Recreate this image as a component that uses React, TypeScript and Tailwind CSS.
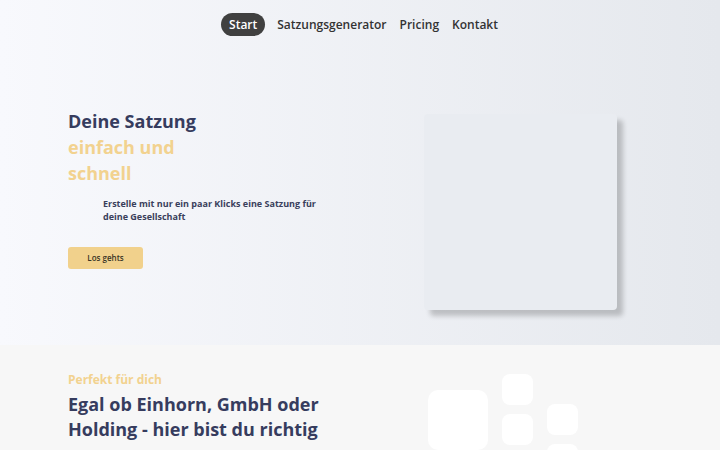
const navItems = ['Start', 'Satzungsgenerator', 'Pricing', 'Kontakt'];

export default function App() {
  return (
    <div className="min-h-screen bg-[#f7f7f7] font-['Open_Sans',sans-serif]">
      {/* Hero */}
      <section className="h-[345px] bg-gradient-to-r from-[#f8f9fd] to-[#e5e8ed]">
        <nav className="flex justify-center gap-[11px] pt-[13px]">
          {navItems.map((item, i) => (
            <a
              key={item}
              href="#"
              className={
                i === 0
                  ? 'rounded-full bg-[#404040] px-[8px] h-[23px] leading-[23px] text-[12px] font-semibold text-white'
                  : 'px-[1px] h-[23px] leading-[23px] text-[12px] font-semibold text-[#333]'
              }
            >
              {item}
            </a>
          ))}
        </nav>

        <div className="flex pl-[68px] pt-[72px]">
          <div className="w-[356px]">
            <h1 className="text-[18px] font-bold leading-[26px] text-[#363c5e]">
              Deine Satzung
              <br />
              <span className="text-[#f2d28f]">
                einfach und
                <br />
                schnell
              </span>
            </h1>
            <p className="mt-[11px] pl-[35px] text-[9px] font-bold leading-[13px] text-[#3a3f5c]">
              Erstelle mit nur ein paar Klicks eine Satzung für
              <br />
              deine Gesellschaft
            </p>
            <button className="mt-[24px] h-[22px] w-[75px] rounded-[3px] bg-[#f1d18c] text-[8px] font-semibold text-[#3a3526]">
              Los gehts
            </button>
          </div>
          <div className="mt-[6px] h-[196px] w-[193px] rounded-[4px] bg-[#e9ecf1] shadow-[6px_6px_5px_rgba(0,0,0,0.2)]" />
        </div>
      </section>

      {/* Target group */}
      <section className="flex pl-[68px] pt-[26px]">
        <div className="w-[360px]">
          <p className="text-[12px] font-bold text-[#f2d28f]">Perfekt für dich</p>
          <h2 className="mt-[3px] text-[18px] font-bold leading-[25px] text-[#363c5e]">
            Egal ob Einhorn, GmbH oder
            <br />
            Holding - hier bist du richtig
          </h2>
        </div>
        <div className="flex gap-[14px] pt-[3px]">
          <div className="mt-[16px] h-[60px] w-[60px] rounded-[10px] bg-white" />
          <div className="flex flex-col gap-[9px]">
            <div className="h-[31px] w-[31px] rounded-[8px] bg-white" />
            <div className="h-[31px] w-[31px] rounded-[8px] bg-white" />
          </div>
          <div className="flex flex-col gap-[9px] pt-[30px]">
            <div className="h-[31px] w-[31px] rounded-[8px] bg-white" />
            <div className="h-[31px] w-[31px] rounded-[8px] bg-white" />
          </div>
        </div>
      </section>
    </div>
  );
}
